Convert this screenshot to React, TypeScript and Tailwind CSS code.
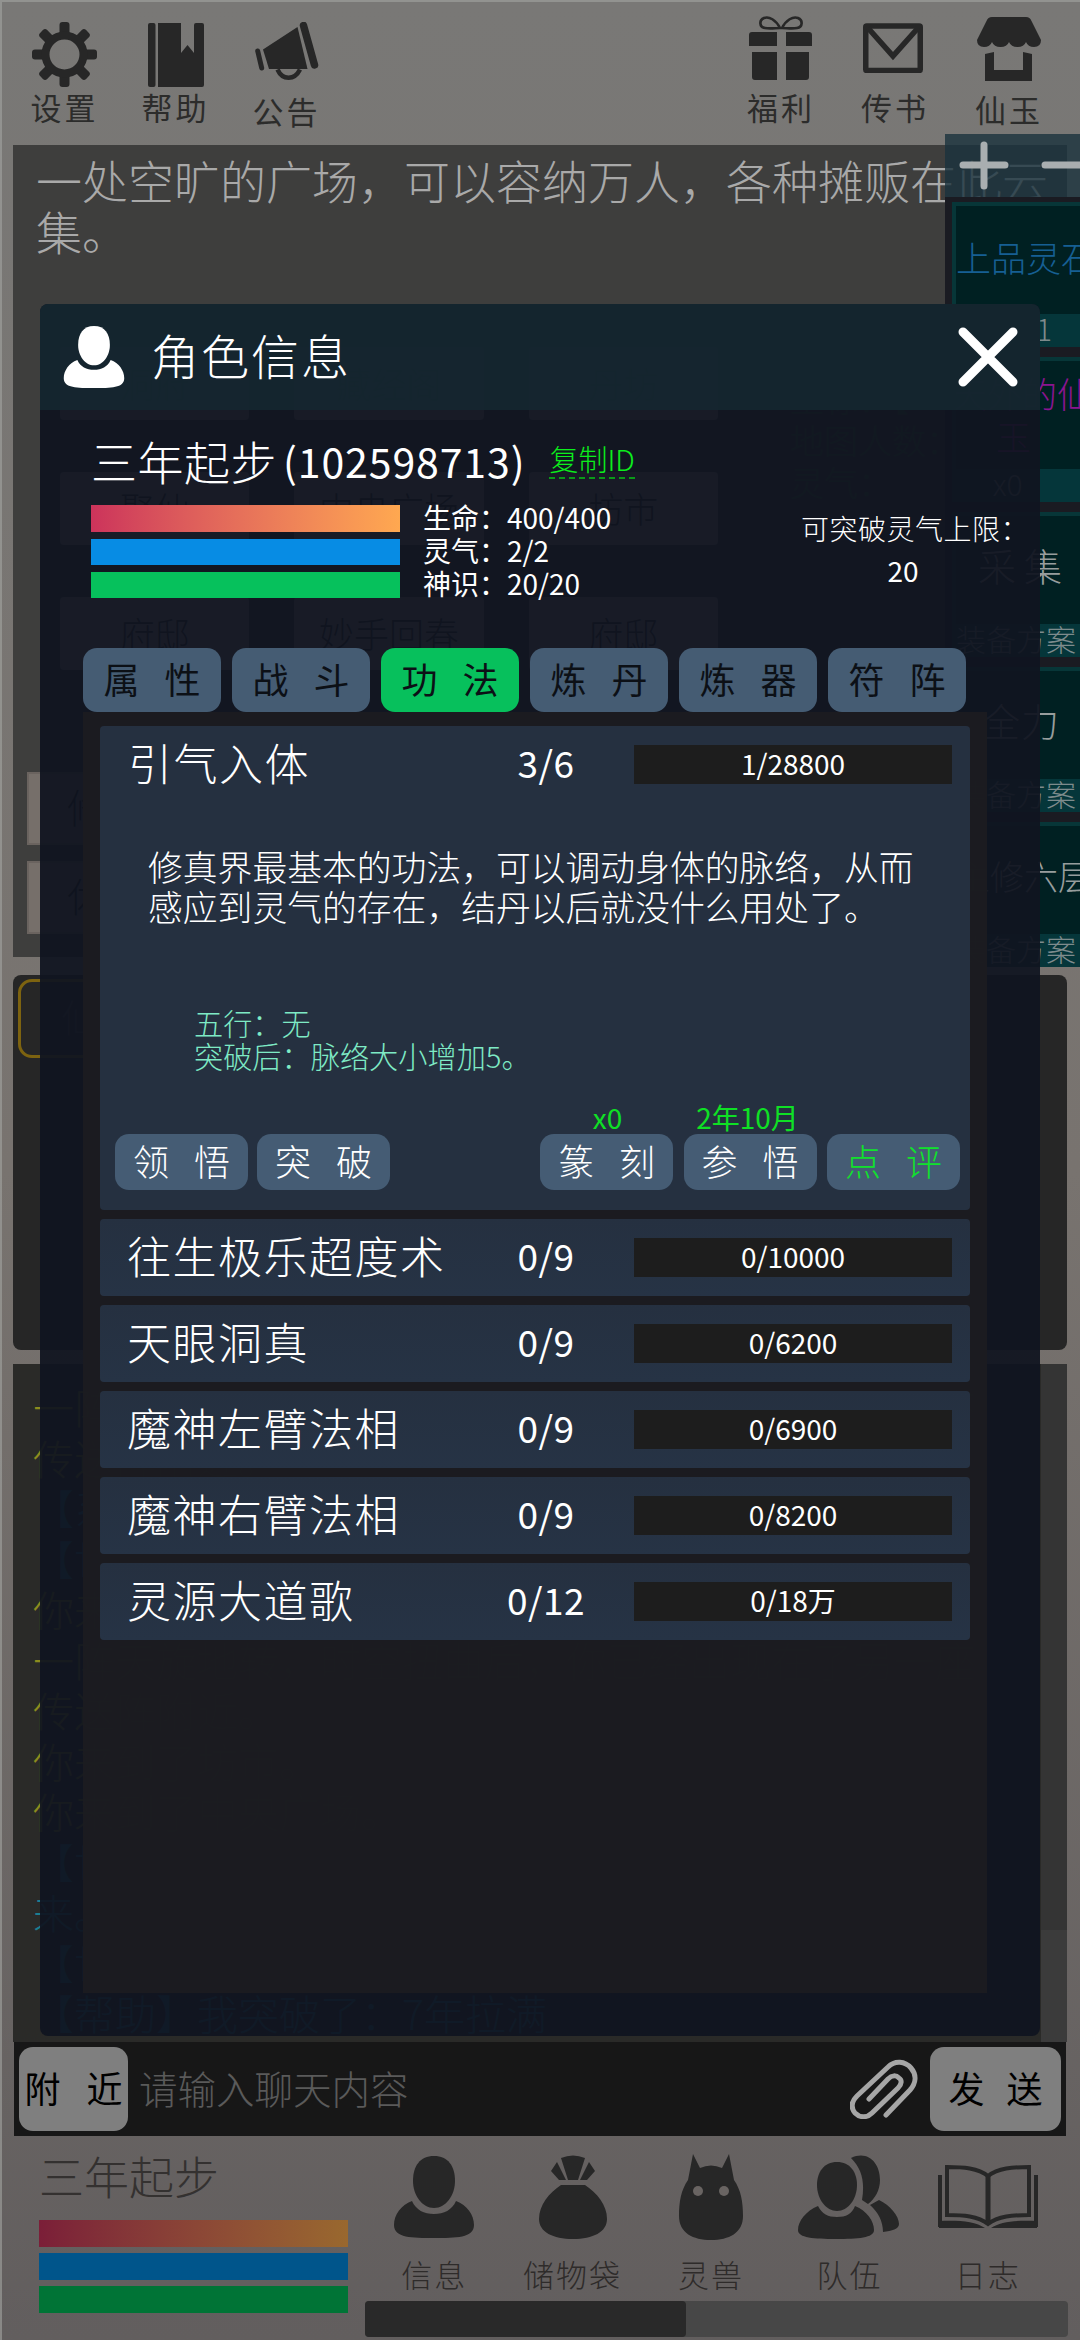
import React from "react";

interface Skill {
  name: string;
  level: string;
  progress: string;
}

const skills: Skill[] = [
  { name: "往生极乐超度术", level: "0/9", progress: "0/10000" },
  { name: "天眼洞真", level: "0/9", progress: "0/6200" },
  { name: "魔神左臂法相", level: "0/9", progress: "0/6900" },
  { name: "魔神右臂法相", level: "0/9", progress: "0/8200" },
  { name: "灵源大道歌", level: "0/12", progress: "0/18万" },
];

const tabs = ["属性", "战斗", "功法", "炼丹", "炼器", "符阵"];

const logs = [
  { text: "一阵天旋地转，时空扭曲后，你已经出现在了另一座", color: "text-[#8c8c1e]" },
  { text: "传送阵附近。", color: "text-[#8c8c1e]" },
  { text: "【系统】欢迎来到修仙世界", color: "text-[#1a7f92]" },
  { text: "【世界】三年起步", color: "text-[#1a7f92]" },
  { text: "你来到了中央广场。", color: "text-[#8c8c1e]" },
  { text: "一阵天旋地转，时空扭曲后，你已经出现在了另一座", color: "text-[#8c8c1e]" },
  { text: "传送阵附近。", color: "text-[#8c8c1e]" },
  { text: "你来到了坊市。", color: "text-[#8c8c1e]" },
  { text: "你来到了中央广场。", color: "text-[#8c8c1e]" },
  { text: "【世界】有一批货，想找人帮忙收，有意者私聊我一", color: "text-[#1a7f92]" },
  { text: "来。", color: "text-[#1a7f92]" },
  { text: "【世界】有人在吗？(附近)", color: "text-[#1a7f92]" },
  { text: "【帮助】我突破了：7年拉满", color: "text-[#1a7f92]" },
];

const GearIcon = () => (
  <svg width="65" height="65" viewBox="0 0 65 65" fill="#272727">
    {[0, 45, 90, 135, 180, 225, 270, 315].map((a) => (
      <rect key={a} x="27.5" y="0" width="10" height="16" rx="3" transform={`rotate(${a} 32.5 32.5)`} />
    ))}
    <circle cx="32.5" cy="32.5" r="19" fill="none" stroke="#272727" strokeWidth="8" />
  </svg>
);

const BookmarkIcon = () => (
  <svg width="56" height="64" viewBox="0 0 56 64" fill="#272727">
    <rect x="0" y="0" width="7.5" height="64" rx="2" />
    <path d="M10 0h23v30l6.500-8 6.500 8V2q0-2 2-2h6q2 0 2 2v60q0 2-2 2H10z" />
  </svg>
);

const MegaphoneIcon = () => (
  <svg width="64" height="60" viewBox="0 0 64 60" fill="#272727">
    <path d="M8 27.500 42.500 5l10 42H14z" />
    <path d="M48.500 3.500 59.500 43" stroke="#272727" strokeWidth="7.500" strokeLinecap="round" />
    <path d="M2.700 29 6.700 46" stroke="#272727" strokeWidth="5" strokeLinecap="round" />
    <path d="M22.500 47.500c5 11 17 11 22.500 0" fill="none" stroke="#272727" strokeWidth="4.500" />
  </svg>
);

const GiftIcon = () => (
  <svg width="64" height="64" viewBox="0 0 64 64" fill="#272727">
    <path
      d="M31 12C27 4 20 0 15 2c-5 2-5 9 1 10 5 1 10 0 15 0zm2 0c4-8 11-12 16-10 5 2 5 9-1 10-5 1-10 0-15 0z"
      fill="none"
      stroke="#272727"
      strokeWidth="2.600"
    />
    <path d="M3 16h25v14H0V19q0-3 3-3zM37 16h23q3 0 3 3v11H37zM3 36h25v28H6q-3 0-3-3zM37 36h23v25q0 3-3 3H37z" />
  </svg>
);

const MailIcon = () => (
  <svg width="60" height="50" viewBox="0 0 60 50" fill="none" stroke="#272727" strokeWidth="5.500">
    <rect x="2.750" y="3" width="54.500" height="44.500" rx="1" />
    <path d="M5 5 30 33 55 5" />
  </svg>
);

const ShopIcon = () => (
  <svg width="64" height="64" viewBox="0 0 64 64" fill="#272727">
    <path d="M15 0h34q4 0 5.500 4L64 23q0 7-7 7-6 0-8-5-2 5-8.500 5-6.500 0-8.500-5-2 5-8.500 5Q17 30 15 25q-2 5-8 5-7 0-7-7L9.500 4Q11 0 15 0z" />
    <path d="M8 37 17 35V53H46V35l9 2V64H8z" />
  </svg>
);

const PersonIcon = ({ size, color }: { size: number; color: string }) => (
  <svg width={size} height={size} viewBox="0 0 82 82" fill={color}>
    <path d="M41 0c14 0 21 10 21 25 0 14-9 27-21 27S20 39 20 25C20 10 27 0 41 0z" />
    <path d="M19 45c4 9 12 13 22 13s18-4 22-13c11 4 18 14 18 24 0 13-18 13-40 13S1 82 1 69c0-10 7-20 18-24z" />
  </svg>
);

const BagIcon = () => (
  <svg width="68" height="84" viewBox="0 0 68 84" fill="#272727">
    <path d="M22 3q12-5 24 0L39 25H29zM18 7l9 18h-7L12 16zM50 7l-9 18h7l8-9zM22 30h24c12 8 22 20 22 34 0 13-14 20-34 20S0 77 0 64c0-14 10-26 22-34z" />
  </svg>
);

const BeastIcon = () => (
  <svg width="66" height="86" viewBox="0 0 66 86">
    <path d="M15 0 22 14q11-5 22 0L51 0l5 26c7 10 9 22 9 36 0 17-14 24-32 24S1 79 1 62c0-14 2-26 9-36z" fill="#272727" />
    <circle cx="20" cy="37" r="5" fill="#696462" />
    <circle cx="46" cy="37" r="5" fill="#696462" />
  </svg>
);

const TeamIcon = () => (
  <svg width="102" height="85" viewBox="0 0 102 85" fill="#272727">
    <path d="M39 7c13 0 20 10 20 23 0 14-9 26-20 26S19 44 19 30C19 17 26 7 39 7z" />
    <path d="M20 51c4 8 10 11 19 11s15-3 18-11c12 5 19 15 19 24 0 8-16 9-38 9S0 83 0 75c0-9 8-19 20-24z" />
    <path d="M53 3c17-8 29 5 29 22 0 10-5 19-12 24l-6-4c3-18 0-31-11-42zM81 45c11 5 20 16 20 24 0 5-7 7-16 8 0-11-5-20-13-27z" />
  </svg>
);

const BookIcon = () => (
  <svg width="102" height="64" viewBox="0 0 102 64" fill="none" stroke="#272727" strokeWidth="4">
    <path d="M51 11C41 3 26 2 10 2v48c16 0 31 1 41 9 10-8 25-9 41-9V2C76 2 61 3 51 11z" />
    <path d="M51 10v48" strokeWidth="5" />
    <path d="M3 10v52M99 10v52" strokeWidth="4" />
    <path d="M2 56c18-1 36 0 46 7H2zM100 56c-18-1-36 0-46 7h46z" fill="#272727" stroke="none" />
  </svg>
);

const ClipIcon = () => (
  <svg width="68" height="60" viewBox="0 0 68 60" fill="none" stroke="#a6a6a6" strokeWidth="5" strokeLinecap="round">
    <path d="M36 56 60 31c6-7 7-15 1-22-6-7-16-8-23-1L7 37c-6 6-6 12-2 17 5 5 12 5 17 0l26-25c4-4 4-8 1-10-3-3-7-3-11 1L19 40" />
  </svg>
);

const IconItem = ({ label, children, drop }: { label: string; children: React.ReactNode; drop: string }) => (
  <div className="flex flex-col items-center">
    <div className="h-[87px] flex items-end justify-center">{children}</div>
    <span className={`text-[31px] leading-none tracking-[3px] text-[#2c2c2b] font-normal ${drop}`}>{label}</span>
  </div>
);

const NavItem = ({ label, children }: { label: string; children: React.ReactNode }) => (
  <div className="flex flex-col items-center">
    <div className="h-[86px] flex items-center justify-center">{children}</div>
    <span className="mt-[18px] mb-[2px] text-[31px] leading-none tracking-[2px] text-[#2e2b2a] whitespace-nowrap">
      {label}
    </span>
  </div>
);

const Spread = ({ text, gap }: { text: string; gap: string }) => (
  <span className={`flex leading-none pb-[4px] ${gap}`}>
    <span>{text[0]}</span>
    <span>{text[1]}</span>
  </span>
);

const ActionButton = ({ text, color }: { text: string; color?: string }) => (
  <button
    className={`w-[133px] h-[56px] rounded-[14px] bg-[#455c74] text-[36px] flex items-center justify-center ${color ?? "text-white"}`}
  >
    <Spread text={text} gap="gap-[25px]" />
  </button>
);

const MapNode = ({ text }: { text: string }) => (
  <div className="h-[73px] rounded bg-[#938d8a] text-[35px] text-[#101010] flex items-center justify-center">{text}</div>
);

const SideItem = ({ children, footer }: { children: React.ReactNode; footer: string }) => (
  <div className="w-[260px] h-[145px] border-4 border-b-0 border-[#073638] bg-[#002022] flex flex-col">
    <div className="flex-1 relative overflow-hidden">{children}</div>
    <div className="h-[33px] bg-[#05363a] text-[#7d8b8c] text-[30px] leading-[29px] whitespace-nowrap">{footer}</div>
  </div>
);

const Level = ({ level, progress }: { level: string; progress: string }) => (
  <>
    <div className="w-[176px] pb-[4px] text-center text-[37px] leading-none tracking-[0.500px] font-normal">{level}</div>
    <div className="w-[318px] h-[39px] bg-[#1d1d1d] text-[28px] leading-[36px] text-center font-normal">{progress}</div>
  </>
);

// 左侧地图、按钮与日志
const Scene = () => (
  <div className="pl-[13px] pr-[13px]">
    <div className="h-[812px] bg-[#3e3e3d] overflow-hidden">
      <p className="ml-[23px] mt-[9px] text-[46px] leading-[51px] text-[#a9a9a9] whitespace-nowrap">
        一处空旷的广场，可以容纳万人，各种摊贩在此云
        <br />
        集。
      </p>
      <div className="mt-[91px] flex">
        <div className="w-[658px] ml-[47px] grid grid-cols-3 gap-x-[45px] gap-y-[52px]">
          <MapNode text="洞府" />
          <MapNode text="藏经阁" />
          <MapNode text="丹坊" />
          <MapNode text="聚仙" />
          <MapNode text="中央广场" />
          <MapNode text="坊市" />
          <MapNode text="府邸" />
          <MapNode text="妙手回春" />
          <MapNode text="府邸" />
        </div>
        <p className="ml-[72px] mt-[30px] text-[34px] leading-[42px] text-[#2f6b30]">
          坐标：【一】
          <br />
          地图人数：
          <br />
          灵气：
        </p>
      </div>
      <div className="mt-[102px] ml-[14px] w-[190px] h-[73px] bg-[#766f6a] border-2 border-[#6a635f] pl-[38px] text-[40px] leading-[64px] text-[#0c0c0c]">
        修炼
      </div>
      <div className="mt-[16px] ml-[14px] w-[190px] h-[73px] bg-[#766f6a] border-2 border-[#6a635f] pl-[38px] text-[40px] leading-[64px] text-[#0c0c0c]">
        休息
      </div>
    </div>
    <div className="mt-[18px] h-[375px] rounded-lg bg-[#262626] overflow-hidden">
      <div className="ml-[5px] mt-[4px] w-[200px] h-[79px] rounded-[14px] border-[3px] border-[#7d6310] pl-[40px] text-[38px] leading-[68px] text-[#454545]">
        仙友
      </div>
    </div>
    <div className="mt-[14px] h-[678px] bg-[#2a2a28] flex overflow-hidden">
      <div className="flex-1 pl-[20px] pt-[17px] text-[41px] leading-[50.500px] whitespace-nowrap overflow-hidden">
        {logs.map((l, i) => (
          <p key={i} className={l.color}>
            {l.text}
          </p>
        ))}
      </div>
      <div className="w-[26px] bg-[#343434] flex flex-col justify-end">
        <div className="h-[112px] bg-[#3b3b3b]" />
      </div>
    </div>
  </div>
);

// 快捷栏，压在场景右侧
const SidePanel = () => (
  <div className="absolute left-[945px] top-[134px] w-[135px] h-[833px] overflow-hidden">
    <div className="h-[63px] bg-[#1a323d]/80 flex items-center">
      <svg width="135" height="63" viewBox="0 0 135 63" stroke="#a9aeb0" strokeWidth="7" strokeLinecap="round">
        <path d="M18 31H60M39 11V52M100 31H150" />
      </svg>
    </div>
    <div className="h-[770px] bg-[#1a1b22] pt-[5px] pl-[7px] flex flex-col gap-[10px]">
      <SideItem footer="　　 &nbsp;&nbsp;1">
        <p className="mt-[33px] text-[35px] leading-none text-[#165f93] whitespace-nowrap">上品灵石</p>
      </SideItem>
      <SideItem footer="　 x0">
        <p className="mt-[10px] -ml-[4px] text-[35px] leading-[43px] text-[#8a1590] whitespace-nowrap">
          天外的仙
          <br />
          <span className="ml-[44px]">玉</span>
        </p>
      </SideItem>
      <SideItem footer="装备方案">
        <p className="mt-[30px] ml-[22px] text-[38px] leading-none text-[#979d9d] flex gap-[8px]">
          <span>采</span>
          <span>集</span>
        </p>
      </SideItem>
      <SideItem footer="装备方案">
        <p className="mt-[30px] ml-[26px] text-[38px] leading-none text-[#979d9d] flex gap-[1px]">
          <span>全</span>
          <span>力</span>
        </p>
      </SideItem>
      <SideItem footer="装备方案">
        <p className="mt-[33px] text-[34px] leading-none text-[#979d9d] whitespace-nowrap">主修六层</p>
      </SideItem>
    </div>
  </div>
);

const RoleDialog = () => (
  <div className="absolute left-[40px] top-[304px] w-[1000px] h-[1732px] rounded-lg overflow-hidden bg-[#101420]/94 text-white">
    <div className="h-[106px] bg-[#15262f]/95 flex items-center pl-[23px] pr-[21px]">
      <PersonIcon size={62} color="#ffffff" />
      <h2 className="ml-[26px] pb-[6px] text-[48px] leading-none tracking-[2px]">角色信息</h2>
      <svg className="ml-auto" width="62" height="62" viewBox="0 0 62 62" stroke="#fff" strokeWidth="9" strokeLinecap="round">
        <path d="M6 6 56 56M56 6 6 56" />
      </svg>
    </div>

    <div className="flex items-center h-[60px] mt-[20px] pl-[51px]">
      <span className="text-[46px] leading-none tracking-[0.500px]">三年起步</span>
      <span className="ml-[6px] text-[41px] leading-none tracking-[0.900px] font-normal">(102598713)</span>
      <span className="ml-[24px] h-[37px] text-[29px] leading-[32px] text-[#0cee1c] border-b-2 border-dashed border-[#0a9a18]">
        复制ID
      </span>
    </div>

    <div className="flex pl-[51px] mt-[15px]">
      <div className="w-[309px] flex flex-col gap-[7px]">
        <div className="h-[27px] bg-gradient-to-r from-[#cc335b] to-[#ffa850]" />
        <div className="h-[26px] bg-[#078ce4]" />
        <div className="h-[26px] bg-[#06c15c]" />
      </div>
      <div className="ml-[23px] -mt-[4px] text-[28px] leading-[33px] font-normal">
        <p>生命：400/400</p>
        <p>灵气：2/2</p>
        <p>神识：20/20</p>
      </div>
      <div className="ml-auto mr-[3px] mt-[2px] text-[28px] leading-[42px] w-[236px]">
        <p className="whitespace-nowrap tracking-[0.500px]">可突破灵气上限：</p>
        <p className="w-[204px] text-center font-normal">20</p>
      </div>
    </div>

    <div className="flex gap-[11px] pl-[43px] mt-[48px]">
      {tabs.map((t) => (
        <button
          key={t}
          className={`w-[138px] h-[64px] rounded-[14px] text-[36px] text-[#0c1016] font-normal flex items-center justify-center ${
            t === "功法" ? "bg-[#07c05c]" : "bg-[#455c73]"
          }`}
        >
          <Spread text={t} gap="gap-[25px]" />
        </button>
      ))}
    </div>

    <div className="ml-[43px] w-[904px] h-[1281px] bg-[#1c1c20]/93 pt-[14px] px-[17px] flex flex-col gap-[9px]">
      <div className="h-[484px] rounded bg-[#253040] flex flex-col">
        <div className="h-[77px] flex items-center pl-[28px] pr-[18px] shrink-0">
          <span className="flex-1 pb-[6px] text-[44px] leading-none tracking-[1.500px]">引气入体</span>
          <Level level="3/6" progress="1/28800" />
        </div>
        <p className="mt-[43px] ml-[48px] text-[34.800px] leading-[40px] whitespace-nowrap">
          修真界最基本的功法，可以调动身体的脉络，从而
          <br />
          感应到灵气的存在，结丹以后就没什么用处了。
        </p>
        <p className="mt-[80px] ml-[94px] text-[29.200px] leading-[33px] text-[#7eeac5]">
          五行：无
          <br />
          突破后：脉络大小增加5。
        </p>
        <div className="mt-[30px] mb-[2px] flex text-[28px] leading-[30px] text-[#0fe025] text-center font-normal">
          <span className="ml-[441px] w-[133px]">x0</span>
          <span className="ml-[7px] w-[133px]">2年10月</span>
        </div>
        <div className="flex pl-[15px]">
          <ActionButton text="领悟" />
          <div className="w-[9px]" />
          <ActionButton text="突破" />
          <div className="ml-auto flex gap-[10.500px] pr-[10px]">
            <ActionButton text="篆刻" />
            <ActionButton text="参悟" />
            <ActionButton text="点评" color="text-[#10e22c]" />
          </div>
        </div>
      </div>
      {skills.map((s) => (
        <div key={s.name} className="h-[77px] rounded bg-gradient-to-b from-[#253040] to-[#263345] flex items-center pl-[27px] pr-[18px]">
          <span className="flex-1 pb-[6px] text-[44px] leading-none tracking-[1.500px] whitespace-nowrap">{s.name}</span>
          <Level level={s.level} progress={s.progress} />
        </div>
      ))}
    </div>
  </div>
);

const App = () => {
  return (
    <div className="relative w-[1080px] h-[2340px] overflow-hidden bg-linear-to-b from-[#797876] via-[#78736f] to-[#625e5e] font-['Noto_Sans_CJK_SC',sans-serif] font-light">
      <div className="h-[145px] flex justify-between">
        <div className="w-[333px] ml-[9px] grid grid-cols-3">
          <IconItem label="设置" drop="mt-[4px]">
            <GearIcon />
          </IconItem>
          <IconItem label="帮助" drop="mt-[4px]">
            <BookmarkIcon />
          </IconItem>
          <IconItem label="公告" drop="mt-[8px]">
            <div className="pb-[5px]">
              <MegaphoneIcon />
            </div>
          </IconItem>
        </div>
        <div className="w-[342px] mr-[14px] grid grid-cols-3">
          <IconItem label="福利" drop="mt-[4px]">
            <div className="pb-[7px]">
              <GiftIcon />
            </div>
          </IconItem>
          <IconItem label="传书" drop="mt-[4px]">
            <div className="pb-[14px] pr-[5px]">
              <MailIcon />
            </div>
          </IconItem>
          <IconItem label="仙玉" drop="mt-[6px]">
            <div className="pb-[6px]">
              <ShopIcon />
            </div>
          </IconItem>
        </div>
      </div>

      <Scene />

      <div className="ml-[14px] w-[1052px] h-[94px] bg-[#171717] flex items-center pl-[5px] pr-[5px]">
        <button className="w-[109px] h-[84px] rounded-[14px] bg-[#7f7f7f] text-black text-[36px] font-normal flex items-center justify-center">
          <Spread text="附近" gap="gap-[26px]" />
        </button>
        <span className="ml-[11px] pb-[3px] text-[38.500px] leading-none text-[#5a5a5a]">请输入聊天内容</span>
        <div className="ml-auto mr-[12px]">
          <ClipIcon />
        </div>
        <button className="w-[131px] h-[84px] rounded-[14px] bg-[#7f7f7f] text-black text-[36px] font-normal flex items-center justify-center">
          <Spread text="发送" gap="gap-[22px]" />
        </button>
      </div>

      <div className="flex">
        <div className="w-[309px] ml-[39px] pt-[17px]">
          <p className="text-[45px] leading-[46px] text-[#343130]">三年起步</p>
          <div className="mt-[21px] flex flex-col gap-[6.500px]">
            <div className="h-[26.500px] bg-gradient-to-r from-[#7b1e38] to-[#99682e]" />
            <div className="h-[26.500px] bg-[#00558b]" />
            <div className="h-[26.500px] bg-[#007436]" />
          </div>
        </div>
        <div className="w-[703px] ml-[17px] pt-[18px]">
          <div className="w-[692px] grid grid-cols-5">
            <NavItem label="信息">
              <PersonIcon size={82} color="#272727" />
            </NavItem>
            <NavItem label="储物袋">
              <BagIcon />
            </NavItem>
            <NavItem label="灵兽">
              <BeastIcon />
            </NavItem>
            <NavItem label="队伍">
              <TeamIcon />
            </NavItem>
            <NavItem label="日志">
              <BookIcon />
            </NavItem>
          </div>
          <div className="mt-[10px] h-[36px] rounded bg-[#474747]">
            <div className="w-[321px] h-full rounded bg-[#292929]" />
          </div>
        </div>
      </div>

      <SidePanel />
      <RoleDialog />
      <div className="absolute inset-0 border-t-2 border-l-2 border-[#a3a5a1]/60" />
    </div>
  );
};

export default App;
